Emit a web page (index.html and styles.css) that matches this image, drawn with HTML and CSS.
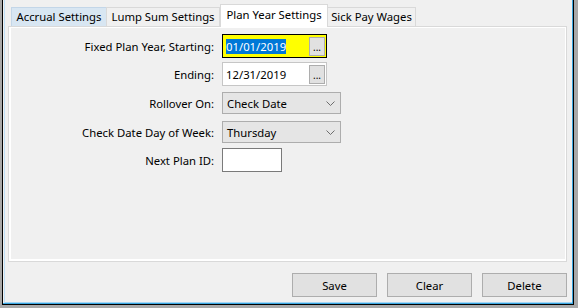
FILE: index.html
```html
<!DOCTYPE html>
<html>
<head>
<meta charset="utf-8">
<link rel="stylesheet" href="styles.css">
</head>
<body>
<div class="window">
  <div class="frame">
    <div class="tabs">
      <div class="tab hot">Accrual Settings</div>
      <div class="tab">Lump Sum Settings</div>
      <div class="tab active">Plan Year Settings</div>
      <div class="tab">Sick Pay Wages</div>
    </div>
    <div class="panel">
      <div class="form">
        <div class="row r1">
          <label class="lbl">Fixed Plan Year, Starting:</label>
          <div class="date focus"><span class="sel">01/01/2019</span><span class="dots">...</span></div>
        </div>
        <div class="row r2">
          <label class="lbl">Ending:</label>
          <div class="date"><span class="val">12/31/2019</span><span class="dots">...</span></div>
        </div>
        <div class="row r3">
          <label class="lbl">Rollover On:</label>
          <div class="combo"><span>Check Date</span><svg class="chev" width="9" height="5" viewBox="0 0 9 5"><polyline points="0.5,0.5 4.5,4.5 8.5,0.5" fill="none" stroke="#6d6d6d" stroke-width="1"/></svg></div>
        </div>
        <div class="row r4">
          <label class="lbl">Check Date Day of Week:</label>
          <div class="combo"><span>Thursday</span><svg class="chev" width="9" height="5" viewBox="0 0 9 5"><polyline points="0.5,0.5 4.5,4.5 8.5,0.5" fill="none" stroke="#6d6d6d" stroke-width="1"/></svg></div>
        </div>
        <div class="row r5">
          <label class="lbl">Next Plan ID:</label>
          <div class="text"></div>
        </div>
      </div>
    </div>
    <div class="actions">
      <button class="btn">Save</button>
      <button class="btn">Clear</button>
      <button class="btn">Delete</button>
    </div>
  </div>
</div>
</body>
</html>
```

FILE: styles.css
```css
* { box-sizing: border-box; }
html, body { margin: 0; padding: 0; }
body {
  background: #a9a9a9;
  font-family: "Noto Sans", "Open Sans", sans-serif;
  font-size: 11.3px;
  color: #000;
  width: 578px;
  height: 308px;
  overflow: hidden;
}
.window {
  margin-left: 2px;
  width: 572px;
  height: 305px;
  border: 1px solid #000;
  border-top: 0;
}
.frame {
  height: 304px;
  background: #f0f0f0;
  border-right: 1px solid #3aa6e0;
  border-bottom: 1px solid #3aa6e0;
  box-shadow: inset 1px 0 0 #f0f0f0, inset 2px 0 0 #bfdff5, inset 0 -1px 0 #a6d6f3;
  padding: 4px 5px 0 5px;
  display: flex;
  flex-direction: column;
}
.tabs {
  display: flex;
  align-items: flex-end;
  height: 22px;
  padding-left: 3px;
  position: relative;
  z-index: 1;
}
.tab {
  height: 19px;
  border: 1px solid #d9d9d9;
  border-bottom: 0;
  background: #f0f0f0;
  display: flex;
  align-items: center;
  justify-content: center;
  white-space: nowrap;
  line-height: 1;
  padding-bottom: 1px;
}
.tab:nth-child(1) { width: 96px; }
.tab:nth-child(2) { width: 114px; margin-left: -1px; }
.tab:nth-child(3) { width: 108px; }
.tab:nth-child(4) { width: 89px; margin-left: -1px; }
.tab.hot {
  background: #d8e6f2;
  border-color: #c3d6e8;
}
.tab.active {
  height: 23px;
  margin-bottom: -1px;
  background: #fff;
  border-color: #d9d9d9;
  padding-bottom: 3px;
}
.panel {
  height: 236px;
  border: 1px solid #d9d9d9;
  box-shadow: inset 1px 1px 0 #fff, inset -1px -1px 0 #fff, inset 2px -2px 0 #fff;
  background: #f0f0f0;
  padding-top: 7px;
}
.form {
  display: flex;
  flex-direction: column;
}
.row {
  display: grid;
  grid-template-columns: 205px max-content;
  column-gap: 8px;
  align-items: center;
}
.r2 { margin-top: 4px; }
.r3 { margin-top: 6px; }
.r4 { margin-top: 7px; }
.r5 { margin-top: 5px; }
.lbl {
  text-align: right;
  white-space: nowrap;
}
.date {
  width: 105px;
  height: 24px;
  border: 1px solid #c6c6c6;
  background: #fff;
  display: flex;
  align-items: center;
  padding: 0 1px 0 3px;
}
.date.focus {
  border-color: #000;
  background: #ffff00;
}
.sel {
  background: #0078d7;
  color: #fff;
  line-height: 15px;
  height: 15px;
}
.val { line-height: 15px; }
.dots {
  margin-left: auto;
  width: 16px;
  height: 19px;
  border: 1px solid #adadad;
  background: #e1e1e1;
  display: flex;
  justify-content: center;
  align-items: flex-end;
  line-height: 1;
  padding-bottom: 3px;
  font-size: 10px;
}
.combo {
  width: 119px;
  height: 22px;
  border: 1px solid #adadad;
  background: #e5e5e5;
  display: flex;
  align-items: center;
  padding: 0 5px 0 4px;
}
.chev { margin-left: auto; }
.text {
  width: 60px;
  height: 24px;
  border: 1px solid #7a7a7a;
  background: #fff;
}
.actions {
  margin-top: 11px;
  display: flex;
  justify-content: flex-end;
  gap: 10px;
}
.btn {
  width: 85px;
  height: 24px;
  border: 1px solid #adadad;
  background: #e1e1e1;
  font-family: inherit;
  font-size: inherit;
  color: #000;
  padding: 0;
  margin: 0;
}
```
